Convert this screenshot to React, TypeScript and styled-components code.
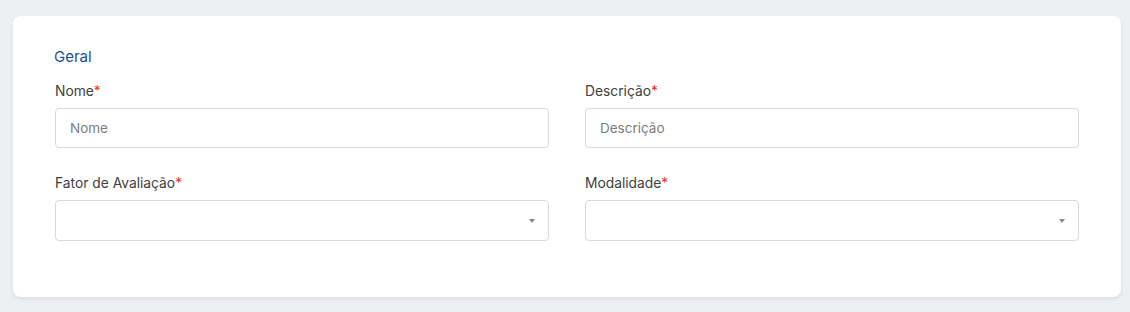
import React from 'react';
import styled, { createGlobalStyle } from 'styled-components';

const GlobalStyle = createGlobalStyle`
	html, body {
		margin: 0;
		padding: 0;
		background: #eeeff1;
		font-family: Inter, 'Noto Sans', sans-serif;
	}
`;

const Page = styled.div`
	padding: 16px 9px 15px 13px;
	min-height: 312px;
	box-sizing: border-box;
`;

const Card = styled.section`
	background: #ffffff;
	border-radius: 8px;
	box-shadow: 0 2px 4px rgba(0, 0, 0, 0.08);
	padding: 30px 42px 56px 42px;
`;

const SectionTitle = styled.h2`
	margin: 0 0 0 -1px;
	font-size: 15px;
	font-weight: 400;
	line-height: 22px;
	color: #1b4e9b;
`;

const Grid = styled.div`
	display: grid;
	grid-template-columns: 1fr 1fr;
	column-gap: 36px;
	row-gap: 27px;
	margin-top: 15px;
`;

const Field = styled.div`
	display: flex;
	flex-direction: column;
`;

const Label = styled.label`
	font-size: 13.8px;
	line-height: 17px;
	color: #404040;
	margin-bottom: 8px;
`;

const Required = styled.span`
	color: #e5322d;
`;

const TextInput = styled.input`
	box-sizing: border-box;
	height: 40px;
	width: 100%;
	border: 1px solid #d9d9d9;
	border-radius: 4px;
	padding: 0 14px;
	font-family: inherit;
	font-size: 13.5px;
	color: #333;
	outline: none;
	&::placeholder {
		color: #7d7d7d;
	}
`;

const SelectBox = styled.div`
	box-sizing: border-box;
	height: 41px;
	border: 1px solid #d9d9d9;
	border-radius: 4px;
	display: flex;
	align-items: center;
	justify-content: flex-end;
	padding-right: 13px;
`;

const Caret = styled.span`
	width: 0;
	height: 0;
	border-left: 3px solid transparent;
	border-right: 3px solid transparent;
	border-top: 4px solid #888888;
	margin-top: 1px;
`;

const fields = [
	{ label: 'Nome', kind: 'text', placeholder: 'Nome' },
	{ label: 'Descrição', kind: 'text', placeholder: 'Descrição' },
	{ label: 'Fator de Avaliação', kind: 'select' },
	{ label: 'Modalidade', kind: 'select' }
];

const App: React.FC = () => {
	return (
		<>
			<GlobalStyle />
			<Page>
				<Card>
					<SectionTitle>Geral</SectionTitle>
					<Grid>
						{fields.map((f) => (
							<Field key={f.label}>
								<Label>
									{f.label}
									<Required>*</Required>
								</Label>
								{f.kind === 'text' ? (
									<TextInput placeholder={f.placeholder} />
								) : (
									<SelectBox>
										<Caret />
									</SelectBox>
								)}
							</Field>
						))}
					</Grid>
				</Card>
			</Page>
		</>
	);
};

export default App;
